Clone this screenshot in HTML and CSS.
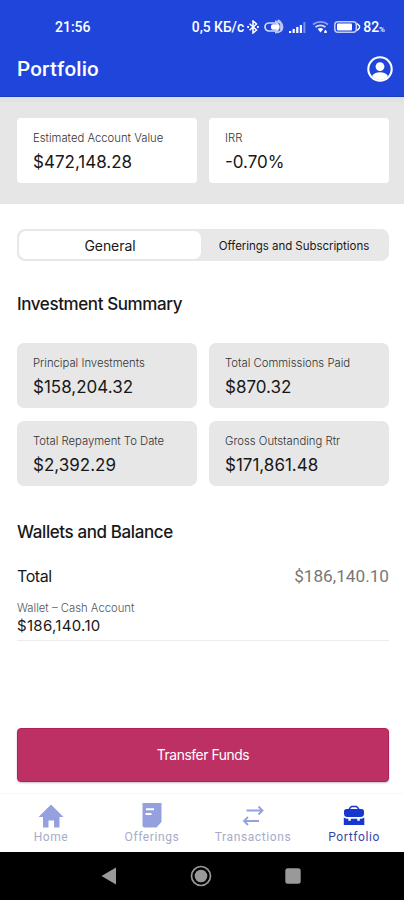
FILE: index.html
```html
<!DOCTYPE html>
<html lang="en">
<head>
    <meta charset="UTF-8">
    <meta name="viewport" content="width=device-width, initial-scale=1.0">
    <title>Portfolio</title>
    <link rel="stylesheet" href="styles.css">
</head>
<body>
    <div class="app">
        <header class="header">
            <div class="status-bar">
                <span class="time">21:56</span>
                <div class="status-icons">
                    <span class="speed">0,5 КБ/с</span>
                    <svg class="bluetooth" width="14" height="14" viewBox="0 0 14 14" fill="none" stroke="#fff" stroke-width="1.5">
                        <path d="M3.5 3.8l7 6.2L7 13V1l3.5 3-7 6.2"/>
                        <path d="M1.2 7h1.8M11 7h1.8" stroke-width="2"/>
                    </svg>
                    <svg class="alarm" width="21" height="16" viewBox="0 0 21 16" fill="none" stroke="#fff">
                        <rect x="1" y="4" width="14" height="8" rx="4" stroke-width="1.7" opacity=".8"/>
                        <rect x="7" y="5.2" width="8" height="5.6" rx="2" fill="#fff" stroke="none"/>
                        <path d="M11 2.5c4.5 0 7.5 2 7.500 5.500s-3 5.500-7.500 5.500M14 1l3 2.500M17 5v6" stroke-width="1.8" opacity=".7"/>
                    </svg>
                    <svg class="signal" width="19" height="13" viewBox="0 0 19 13" fill="#fff">
                        <rect x="1" y="10" width="2.2" height="2"/>
                        <rect x="4.6" y="8" width="2.2" height="4"/>
                        <rect x="8.2" y="6" width="2.2" height="6"/>
                        <rect x="11.8" y="4" width="2.2" height="8"/>
                        <rect x="15.4" y="1" width="2" height="11" opacity=".4"/>
                    </svg>
                    <svg class="wifi" width="17" height="14" viewBox="0 0 17 14" fill="none" stroke="#fff" stroke-width="1.7">
                        <path d="M1 4.5c4.2-3.6 10.800-3.600 15 0" opacity=".5"/>
                        <path d="M3.5 7.2c2.8-2.4 7.200-2.400 10 0" opacity=".8"/>
                        <path d="M5.7 9c1.6-1.4 4-1.4 5.600 0L8.500 12.500z" fill="#fff" stroke="none"/>
                        <path d="M12 12h3M13.5 10v3" stroke-width="1.3"/>
                    </svg>
                    <svg class="battery" width="27" height="12" viewBox="0 0 27 12">
                        <rect x=".8" y=".8" width="21.5" height="10.4" rx="3" fill="none" stroke="#c3ccf5" stroke-width="1.5"/>
                        <rect x="3" y="2.6" width="15" height="6.8" rx="1" fill="#fff"/>
                        <path d="M23 2.500l2.500 2.500v2L23 9.500" fill="none" stroke="#fff" stroke-width="1.4"/>
                    </svg>
                    <span class="charge">82<small>%</small></span>
                </div>
            </div>
            <div class="title-bar">
                <h1>Portfolio</h1>
                <svg width="26" height="26" viewBox="0 0 26 26">
                    <circle cx="13" cy="13" r="11.7" fill="none" stroke="#fff" stroke-width="2.1"/>
                    <circle cx="13" cy="10.6" r="4.4" fill="#fff"/>
                    <path d="M5 20c2-2.7 4.800-3.700 8-3.700s6 1 8 3.700c-2 2.700-5 4-8 4s-6-1.300-8-4z" fill="#fff"/>
                </svg>
            </div>
        </header>

        <section class="overview grid">
            <div class="card white">
                <p class="label">Estimated Account Value</p>
                <p class="value">$472,148.28</p>
            </div>
            <div class="card white">
                <p class="label">IRR</p>
                <p class="value">-0.70%</p>
            </div>
        </section>

        <main class="content">
            <div class="tabs">
                <button class="tab active">General</button>
                <button class="tab">Offerings and Subscriptions</button>
            </div>

            <h2>Investment Summary</h2>
            <div class="grid summary">
                <div class="card">
                    <p class="label">Principal Investments</p>
                    <p class="value">$158,204.32</p>
                </div>
                <div class="card">
                    <p class="label">Total Commissions Paid</p>
                    <p class="value">$870.32</p>
                </div>
                <div class="card">
                    <p class="label">Total Repayment To Date</p>
                    <p class="value">$2,392.29</p>
                </div>
                <div class="card">
                    <p class="label">Gross Outstanding Rtr</p>
                    <p class="value">$171,861.48</p>
                </div>
            </div>

            <h2 class="wallets-title">Wallets and Balance</h2>
            <div class="total">
                <span class="total-label">Total</span>
                <span class="amount">$186,140.10</span>
            </div>
            <div class="wallet">
                <p class="wallet-name">Wallet – Cash Account</p>
                <p class="wallet-value">$186,140.10</p>
            </div>

            <button class="transfer">Transfer Funds</button>
        </main>

        <nav class="nav">
            <a class="nav-item">
                <svg width="26" height="26" viewBox="0 0 26 26" fill="#95a1df">
                    <path d="M13 1.5L25.500 14H21.500v10.500H16V17.500h-5.500v7H5V14H.5z"/>
                </svg>
                <span>Home</span>
            </a>
            <a class="nav-item">
                <svg width="26" height="26" viewBox="0 0 26 26" fill="#95a1df">
                    <path d="M3.5 0h19v19l-5 5.500h-12a2 2 0 0 1-2-2z"/>
                    <path d="M7 6.200h8M6.500 11h6" stroke="#fff" stroke-width="1.9"/>
                </svg>
                <span>Offerings</span>
            </a>
            <a class="nav-item">
                <svg width="26" height="26" viewBox="0 0 26 26" fill="none" stroke="#95a1df" stroke-width="1.8">
                    <path d="M6.5 7.500h16M18.500 3.500l4 4-4 4M19 18H4M8 14l-4 4 4 4"/>
                </svg>
                <span>Transactions</span>
            </a>
            <a class="nav-item active">
                <svg width="26" height="26" viewBox="0 0 26 26" fill="#1636cf">
                    <path d="M8.5 7V5.500l2-2h5l2 2V7" fill="none" stroke="#1636cf" stroke-width="1.5"/>
                    <path d="M5.500 6h15a2.500 2.500 0 0 1 2.500 2.500v2a3.500 3.500 0 0 1-3.500 3.500h-13A3.500 3.500 0 0 1 3 10.500v-2A2.500 2.500 0 0 1 5.500 6z"/>
                    <path d="M2.800 14.500c1.200 1 2.500 1.300 4.500 1.300v2h2.500v-2h6.500v2h2.500v-2c2 0 3.300-.3 4.500-1.300v7.500h-20.500z"/>
                </svg>
                <span>Portfolio</span>
            </a>
        </nav>

        <div class="system-nav">
            <svg width="16" height="20" viewBox="0 0 16 20"><path d="M15 1.500v17L.5 10z" fill="#999"/></svg>
            <svg width="22" height="22" viewBox="0 0 22 22">
                <circle cx="11" cy="11" r="9.5" fill="none" stroke="#999" stroke-width="1.7"/>
                <circle cx="11" cy="11" r="6.3" fill="#999"/>
            </svg>
            <svg width="16" height="16" viewBox="0 0 16 16"><rect x=".3" y=".3" width="15.4" height="15.4" rx="2.5" fill="#999"/></svg>
        </div>
    </div>
</body>
</html>
```
FILE: styles.css
```css
* {
    box-sizing: border-box;
}
body {
    margin: 0;
    font-family: Inter, sans-serif;
    background-color: #fff;
    color: #181818;
}
h1, h2, p {
    margin: 0;
}
button {
    border: 0;
    padding: 0;
    font-family: inherit;
    color: inherit;
}
.app {
    width: 404px;
    height: 900px;
    display: flex;
    flex-direction: column;
    overflow: hidden;
}
.header {
    height: 97px;
    flex-shrink: 0;
    background-color: #2045db;
    border-bottom: 1px solid #183bbf;
    color: #fff;
    font-family: Roboto, sans-serif;
}
.status-bar {
    height: 54px;
    padding: 0 19px 0 55px;
    display: flex;
    align-items: center;
    justify-content: space-between;
    font-size: 14px;
    font-weight: 500;
}
.status-icons {
    display: flex;
    align-items: center;
}
.speed {
    font-size: 13.8px;
    margin-right: 2px;
}
.alarm {
    margin-left: 4px;
}
.signal {
    margin-left: 3px;
}
.wifi {
    margin-left: 5px;
}
.battery {
    margin: 0 2px 0 5px;
}
.charge small {
    font-size: 8px;
}
.title-bar {
    display: flex;
    align-items: center;
    justify-content: space-between;
    height: 30px;
    padding: 0 11px 0 17px;
}
h1 {
    font-size: 20.5px;
    font-weight: 500;
    letter-spacing: 0.2px;
}
.grid {
    display: grid;
    grid-template-columns: 1fr 1fr;
    gap: 12px;
}
.overview {
    height: 107px;
    flex-shrink: 0;
    padding: 21px 15px 21px 17px;
    background: linear-gradient(#dcdee1, #e6e6e6 7px);
}
.card {
    height: 65px;
    padding: 13px 16px;
    border-radius: 7px;
    background-color: #e7e7e7;
}
.card.white {
    border-radius: 4px;
    background-color: #fff;
}
.label {
    font-size: 11.3px;
    line-height: 15px;
    font-weight: 300;
    color: #333;
    white-space: nowrap;
}
.value {
    margin-top: 5px;
    font-size: 17px;
    line-height: 22px;
}
.content {
    flex: 1;
    display: flex;
    flex-direction: column;
    padding: 25px 15px 0 17px;
}
.tabs {
    display: flex;
    height: 32px;
    padding: 2px;
    border-radius: 8px;
    background-color: #e8e8e8;
}
.tab {
    flex: 1;
    padding-top: 1px;
    border-radius: 7px;
    background: none;
    font-size: 11.5px;
    letter-spacing: -0.05px;
}
.tab.active {
    flex: 0 0 182px;
    background-color: #fff;
    font-size: 14px;
}
h2 {
    margin-top: 32px;
    font-size: 17px;
    line-height: 22px;
    font-weight: 500;
    letter-spacing: -0.4px;
}
.summary {
    margin-top: 28px;
    row-gap: 13px;
}
.wallets-title {
    margin-top: 35px;
}
.total {
    display: flex;
    justify-content: space-between;
    margin-top: 22px;
    font-size: 16px;
    line-height: 22px;
}
.total-label {
    letter-spacing: -0.4px;
}
.amount {
    font-family: Roboto, sans-serif;
    font-size: 17.2px;
    color: #777;
}
.wallet {
    margin-top: 13px;
    padding-bottom: 4px;
    border-bottom: 1px solid #ececec;
}
.wallet-name {
    font-size: 11.3px;
    line-height: 16px;
    font-weight: 300;
    color: #555;
}
.wallet-value {
    font-size: 15px;
    line-height: 20px;
    letter-spacing: 0.3px;
}
.transfer {
    height: 54px;
    margin-top: 87px;
    border: 1px solid #b41f55;
    border-radius: 4px;
    background-color: #bd3064;
    box-shadow: 0 1px 2px rgba(0, 0, 0, 0.25);
    color: #fff;
    font-size: 13.8px;
    letter-spacing: -0.4px;
}
.nav {
    display: flex;
    height: 59px;
    flex-shrink: 0;
    padding-top: 9px;
    border-top: 1px solid #f8f8f8;
}
.nav-item {
    flex: 1;
    display: flex;
    flex-direction: column;
    align-items: center;
    font-family: Roboto, sans-serif;
    font-size: 12px;
    line-height: 16px;
    letter-spacing: 0.6px;
    color: #a6abca;
}
.nav-item span {
    padding-left: 1px;
}
.nav-item.active {
    color: #3547a8;
}
.system-nav {
    height: 48px;
    flex-shrink: 0;
    display: flex;
    align-items: center;
    justify-content: center;
    gap: 73px;
    padding-right: 2px;
    background-color: #000;
}
```
